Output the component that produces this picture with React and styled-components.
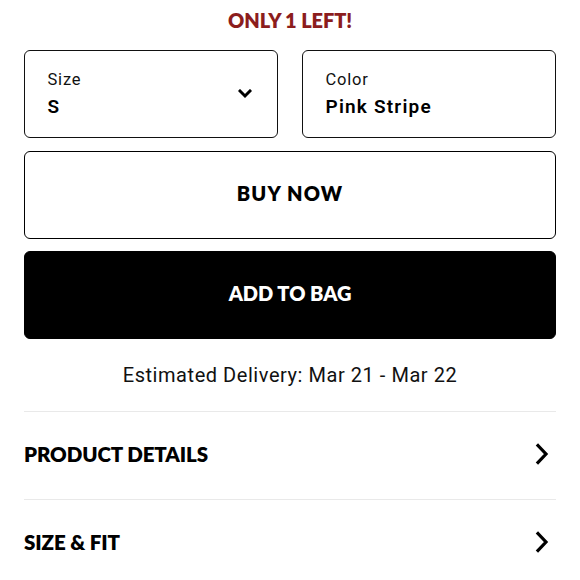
import React from 'react'
import styled, { createGlobalStyle } from 'styled-components'

const GlobalStyle = createGlobalStyle`
  html, body {
    margin: 0;
    padding: 0;
    background: #fff;
  }
  body {
    font-family: Lato, "Liberation Sans", sans-serif;
    color: #000;
    -webkit-font-smoothing: antialiased;
  }
`

const HEAD_FONT = `Lato, "Liberation Sans", sans-serif`
const BODY_FONT = `Roboto, "Liberation Sans", sans-serif`

const Page = styled.div`
  display: flex;
  flex-direction: column;
  padding: 0 24px;
  width: 580px;
  box-sizing: border-box;
`
const Stock = styled.div`
  color: #8c1d1d;
  font-family: ${HEAD_FONT};
  font-size: 20px;
  font-weight: 800;
  line-height: 24px;
  margin: 8px 0 18px;
  text-align: center;
  letter-spacing: -0.1px;
`
const SelectRow = styled.div`
  display: grid;
  grid-template-columns: 1fr 1fr;
  column-gap: 24px;
`
const SelectBox = styled.div`
  align-items: center;
  border: 1.5px solid #111;
  border-radius: 6px;
  box-sizing: border-box;
  display: flex;
  height: 88px;
  padding: 0 25px 0 22.5px;
`
const SelectText = styled.div`
  display: flex;
  flex: 1;
  flex-direction: column;
  gap: 3px;
  font-family: ${BODY_FONT};
`
const SelectLabel = styled.span`
  font-size: 16.5px;
  line-height: 22px;
  color: #111;
  letter-spacing: 0.8px;
`
const SelectValue = styled.span`
  font-size: 19px;
  font-weight: 600;
  line-height: 26px;
  letter-spacing: 1.2px;
`
const Button = styled.button`
  background: ${p => (p.$dark ? '#000' : '#fff')};
  border: 1.5px solid #000;
  border-radius: 6px;
  box-sizing: border-box;
  color: ${p => (p.$dark ? '#fff' : '#000')};
  cursor: pointer;
  font-family: ${HEAD_FONT};
  font-size: 20px;
  font-weight: 800;
  height: 88px;
  letter-spacing: ${p => (p.$dark ? '0' : '1.2px')};
  padding: 0 0 4px;
  width: 100%;
`
const Buttons = styled.div`
  display: flex;
  flex-direction: column;
  gap: 12px;
  margin-top: 13px;
`
const Delivery = styled.div`
  font-family: ${BODY_FONT};
  font-size: 20px;
  line-height: 24px;
  margin: 24px 0 24px;
  text-align: center;
  color: #111;
  letter-spacing: 0.55px;
`
const Accordion = styled.div`
  display: flex;
  flex-direction: column;
`
const AccordionRow = styled.div`
  align-items: center;
  border-top: 1.5px solid #e9e9e9;
  display: flex;
  height: 88px;
  justify-content: space-between;
  padding: 0 7px 3px 0;
  box-sizing: border-box;
`
const AccordionTitle = styled.span`
  font-family: ${HEAD_FONT};
  font-size: 20.5px;
  font-weight: 800;
  letter-spacing: -0.1px;
`

const ChevronDown = () => (
  <svg width="14" height="10" viewBox="0 0 14 10" fill="none">
    <polyline points="2,2 7,7 12,2" stroke="#000" strokeWidth="3" strokeLinecap="square" />
  </svg>
)

const ChevronRight = () => (
  <svg width="14" height="22" viewBox="0 0 14 22" fill="none">
    <polyline points="3,2.5 11,11 3,19.5" stroke="#000" strokeWidth="3.2" strokeLinecap="square" />
  </svg>
)

/* -------------------------------------------- *
 * REACT COMPONENT
 * -------------------------------------------- */

const App = () => (
  <>
    <GlobalStyle />
    <Page>
      <Stock>ONLY 1 LEFT!</Stock>
      <SelectRow>
        <SelectBox>
          <SelectText>
            <SelectLabel>Size</SelectLabel>
            <SelectValue>S</SelectValue>
          </SelectText>
          <ChevronDown />
        </SelectBox>
        <SelectBox>
          <SelectText>
            <SelectLabel>Color</SelectLabel>
            <SelectValue>Pink Stripe</SelectValue>
          </SelectText>
        </SelectBox>
      </SelectRow>
      <Buttons>
        <Button>BUY NOW</Button>
        <Button $dark>ADD TO BAG</Button>
      </Buttons>
      <Delivery>Estimated Delivery: Mar 21 - Mar 22</Delivery>
      <Accordion>
        <AccordionRow>
          <AccordionTitle>PRODUCT DETAILS</AccordionTitle>
          <ChevronRight />
        </AccordionRow>
        <AccordionRow>
          <AccordionTitle>SIZE &amp; FIT</AccordionTitle>
          <ChevronRight />
        </AccordionRow>
      </Accordion>
    </Page>
  </>
)

export default App
